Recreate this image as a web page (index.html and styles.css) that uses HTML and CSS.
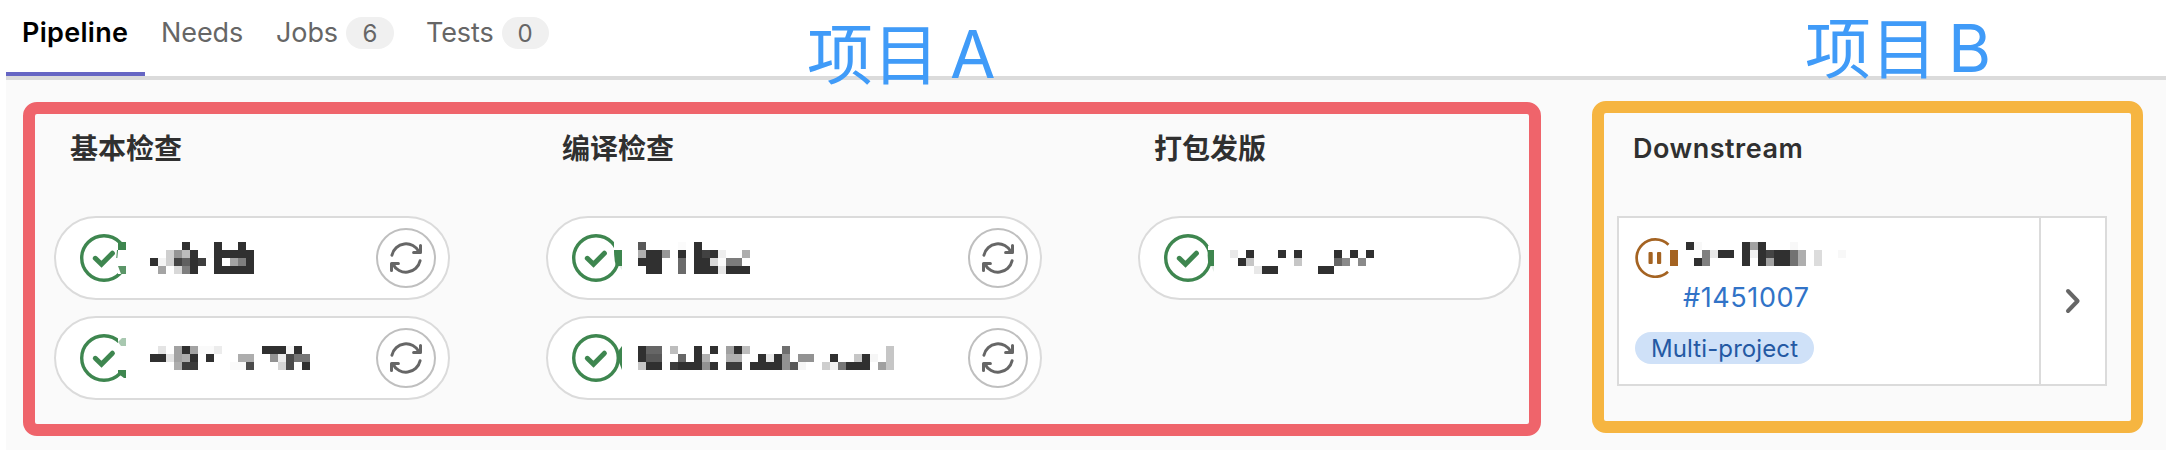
FILE: index.html
```html
<!DOCTYPE html>
<html lang="zh-CN">
<head>
<meta charset="utf-8">
<title>Pipeline</title>
<link rel="stylesheet" href="styles.css">
</head>
<body>
<svg class="defs" aria-hidden="true">
  <symbol id="ok" viewBox="0 0 48 48">
    <circle cx="24" cy="24" r="22.3" fill="none" stroke="#3e864f" stroke-width="3.4"/>
    <path d="M15.3 24.3l6.2 6L32.4 19.2" fill="none" stroke="#3e864f" stroke-width="5" stroke-linejoin="miter" stroke-linecap="round"/>
  </symbol>
  <symbol id="retry" viewBox="0 0 32 32">
    <g id="half" fill="none" stroke="#666" stroke-width="3" stroke-linecap="round" stroke-linejoin="round">
      <path d="M1.9 13.2A14.5 14.5 0 0 1 29 9.8"/>
      <path d="M30.5 3.6V10.6H23.6"/>
    </g>
    <use href="#half" transform="rotate(180 16 16)"/>
  </symbol>
</svg>

<nav class="tabs">
  <a class="tab tab-active"><span class="t-pipeline">Pipeline</span></a>
  <a class="tab tab-needs">Needs</a>
  <a class="tab tab-jobs">Jobs<span class="count">6</span></a>
  <a class="tab tab-tests">Tests<span class="count count-zero">0</span></a>
</nav>

<main class="graph">
  <section class="frame frame-a">
    <div class="stage stage-1">
      <h2 class="title">基本检查</h2>
      <div class="job">
        <svg class="status" viewBox="0 0 56 48"><use href="#ok" width="48" height="48"/>
          <path fill="#fff" d="M38 8h16v32H38z"/><path fill="#3e864f" d="M38 8h8v8h-8zM37 16h1l-.7 8h-1z"/><path fill="#5b9668" d="M38 32h8v8h-5z"/></svg>
        <svg class="mosaic" width="104" height="32" viewBox="0 0 13 4">
          <path fill="#303030" d="M4 0h1v1h-1zM8 0h1v4h-1zM11 0h1v2h-1zM5 1h1v3h-1zM9 1h4v1h-4zM0 2h1v1h-1zM12 2h1v2h-1zM9 3h3v1h-3z"/>
          <path fill="#cfcfcf" d="M2 1h1v2h-1z"/><path fill="#959595" d="M3 1h1v1h-1z"/><path fill="#bcbcbc" d="M4 1h1v1h-1z"/><path fill="#fcfcfc" d="M7 1h1v1h-1z"/>
          <path fill="#f4f4f4" d="M1 2h1v1h-1z"/><path fill="#444" d="M3 2h1v1h-1z"/><path fill="#606060" d="M4 2h1v1h-1z"/><path fill="#3e3e3e" d="M6 2h1v1h-1z"/>
          <path fill="#a4a4a4" d="M10 2h1v1h-1zM1 3h1v1h-1z"/><path fill="#7e7e7e" d="M11 2h1v1h-1zM4 3h1v1h-1z"/><path fill="#d8d8d8" d="M3 3h1v1h-1z"/>
        </svg>
        <button class="retry"><svg width="32" height="32"><use href="#retry"/></svg></button>
      </div>
      <div class="job">
        <svg class="status" viewBox="0 0 56 48"><use href="#ok" width="48" height="48"/>
          <path fill="#fff" d="M38 4h16v36H38z"/><path fill="#a8c8b0" d="M38 8l4-4h4v8h-5z"/><path fill="#3e864f" d="M38 36h8v8h-2l-4-3-2 1z"/></svg>
        <svg class="mosaic" width="160" height="24" viewBox="0 0 20 3">
          <path fill="#303030" d="M4 0h1v1h-1zM14 0h3v1h-3zM18 0h1v1h-1zM0 1h2v1h-2zM5 1h1v1h-1zM7 1h1v1h-1zM19 2h1v1h-1z"/>
          <path fill="#e4e4e4" d="M1 0h1v1h-1zM2 1h1v1h-1z"/><path fill="#a2a2a2" d="M3 0h1v2h-1zM5 0h1v1h-1z"/><path fill="#fafafa" d="M6 0h2v1h-2zM10 2h2v1h-2z"/>
          <path fill="#ececec" d="M8 0h1v1h-1zM16 1h1v1h-1z"/><path fill="#f6f6f6" d="M17 0h1v1h-1z"/><path fill="#adadad" d="M4 1h1v1h-1zM11 1h2v1h-2zM3 2h1v1h-1z"/>
          <path fill="#939393" d="M15 1h1v1h-1z"/><path fill="#4b4b4b" d="M17 1h1v2h-1zM12 2h1v1h-1z"/><path fill="#757575" d="M18 1h2v1h-2z"/><path fill="#3c3c3c" d="M4 2h2v1h-2z"/><path fill="#d6d6d6" d="M16 2h1v1h-1z"/>
        </svg>
        <button class="retry"><svg width="32" height="32"><use href="#retry"/></svg></button>
      </div>
    </div>

    <div class="stage stage-2">
      <h2 class="title">编译检查</h2>
      <div class="job">
        <svg class="status" viewBox="0 0 56 48"><use href="#ok" width="48" height="48"/>
          <path fill="#fff" d="M42 8h8v24h-2l-3-4-3-5z"/><path fill="#3e864f" d="M42 16h8v16h-6q-2-6-2-16z"/><path fill="#e3eee5" d="M47 32h3v4z"/></svg>
        <svg class="mosaic" width="112" height="32" viewBox="0 0 14 4">
          <path fill="#303030" d="M7 0h1v4h-1zM1 1h2v3h-2zM5 1h1v1h-1zM9 1h1v1h-1zM0 2h1v1h-1zM8 2h1v2h-1zM9 3h1v1h-1zM11 3h3v1h-3z"/>
          <path fill="#585858" d="M0 0h1v1h-1z"/><path fill="#fbfbfb" d="M5 0h1v1h-1zM10 2h1v1h-1z"/><path fill="#aeaeae" d="M0 1h1v1h-1zM13 1h1v1h-1z"/><path fill="#979797" d="M3 1h1v1h-1z"/>
          <path fill="#424242" d="M8 1h1v1h-1z"/><path fill="#eee" d="M10 1h1v1h-1z"/><path fill="#6a6a6a" d="M5 2h1v2h-1z"/><path fill="#d8d8d8" d="M9 2h1v1h-1z"/><path fill="#7c7c7c" d="M11 2h2v1h-2z"/><path fill="#e6e6e6" d="M10 3h1v1h-1z"/>
        </svg>
        <button class="retry"><svg width="32" height="32"><use href="#retry"/></svg></button>
      </div>
      <div class="job">
        <svg class="status" viewBox="0 0 56 48"><use href="#ok" width="48" height="48"/><path fill="#3e864f" d="M50 12v24l-3-8V16z"/></svg>
        <svg class="mosaic" width="256" height="24" viewBox="0 0 32 3">
          <path fill="#303030" d="M0 0h1v2h-1zM7 0h1v3h-1zM9 0h1v1h-1zM12 0h1v1h-1zM15 1h1v2h-1zM17 1h1v2h-1zM24 1h1v1h-1zM28 1h1v2h-1zM1 2h2v1h-2zM5 2h2v1h-2zM9 2h1v1h-1zM14 2h1v1h-1zM16 2h1v1h-1zM26 2h2v1h-2z"/>
          <path fill="#666" d="M1 0h2v1h-2zM5 1h1v1h-1z"/><path fill="#bdbdbd" d="M4 0h1v1h-1zM13 0h1v1h-1z"/><path fill="#a0a0a0" d="M11 0h1v1h-1zM30 2h1v1h-1z"/><path fill="#6f6f6f" d="M18 0h1v1h-1z"/>
          <path fill="#c6c6c6" d="M31 0h1v3h-1zM27 1h1v1h-1zM0 2h1v1h-1z"/><path fill="#585858" d="M1 1h2v1h-2zM19 2h1v1h-1z"/><path fill="#b0b0b0" d="M8 1h1v1h-1zM11 1h2v1h-2z"/><path fill="#e8e8e8" d="M16 1h1v1h-1z"/>
          <path fill="#929292" d="M18 1h1v2h-1zM20 1h2v1h-2zM8 2h1v1h-1z"/><path fill="#f6f6f6" d="M29 1h1v1h-1zM20 2h1v1h-1z"/><path fill="#3c3c3c" d="M4 2h1v1h-1zM11 2h2v1h-2z"/><path fill="#cecece" d="M23 2h1v1h-1z"/><path fill="#f2f2f2" d="M24 2h1v1h-1z"/><path fill="#777" d="M25 2h1v1h-1z"/>
        </svg>
        <button class="retry"><svg width="32" height="32"><use href="#retry"/></svg></button>
      </div>
    </div>

    <div class="stage stage-3">
      <h2 class="title">打包发版</h2>
      <div class="job">
        <svg class="status" viewBox="0 0 56 48"><use href="#ok" width="48" height="48"/>
          <path fill="#fff" d="M44 12h6v20h-3l-3-8z"/><path fill="#3e864f" d="M44 16h6v16h-5q-2-8-1-16z"/><path fill="#e3eee5" d="M47 32h3v6z"/></svg>
        <svg class="mosaic" width="144" height="24" viewBox="0 0 18 3">
          <path fill="#303030" d="M2 0h1v1h-1zM6 0h1v1h-1zM8 0h1v1h-1zM13 0h1v1h-1zM15 0h1v1h-1zM17 0h1v1h-1zM1 1h1v1h-1zM4 2h2v1h-2zM11 2h2v1h-2z"/>
          <path fill="#e8e8e8" d="M0 0h1v1h-1zM3 2h1v1h-1z"/><path fill="#c6c6c6" d="M2 1h1v1h-1zM8 1h1v1h-1z"/><path fill="#666" d="M13 1h1v1h-1z"/><path fill="#8a8a8a" d="M14 1h1v1h-1zM16 1h1v1h-1z"/>
        </svg>
      </div>
    </div>
  </section>

  <section class="frame frame-b">
    <h2 class="title title-down"><span class="t-down">Downstream</span></h2>
    <div class="card">
      <div class="card-main">
        <div class="card-head">
          <svg width="44" height="40" viewBox="0 0 44 40">
            <path d="M33.5 6.8A18.7 18.7 0 1 0 33 33.8" fill="none" stroke="#a46322" stroke-width="2.7"/>
            <path fill="#a46322" d="M35 12h8v16h-8z"/>
            <rect x="13.5" y="14" width="4.2" height="12" rx="1" fill="#a46322"/><rect x="22" y="14" width="4.2" height="12" rx="1" fill="#a46322"/>
          </svg>
          <svg class="mosaic" width="160" height="24" viewBox="0 0 20 3">
            <path fill="#303030" d="M0 0h1v1h-1zM7 0h1v3h-1zM9 0h1v3h-1zM4 1h2v1h-2zM11 1h2v2h-2zM1 2h1v1h-1z"/>
            <path fill="#f8f8f8" d="M1 0h1v1h-1zM13 0h1v1h-1zM19 1h1v1h-1z"/><path fill="#a2a2a2" d="M8 0h1v1h-1zM10 2h1v1h-1z"/><path fill="#808080" d="M2 1h1v2h-1z"/><path fill="#e8e8e8" d="M3 1h1v1h-1z"/>
            <path fill="#f0f0f0" d="M8 1h1v1h-1z"/><path fill="#444" d="M10 1h1v1h-1z"/><path fill="#727272" d="M13 1h1v2h-1z"/><path fill="#aeaeae" d="M14 1h1v2h-1z"/><path fill="#dcdcdc" d="M16 1h1v2h-1z"/>
          </svg>
        </div>
        <a class="number"><span class="t-num">#1451007</span></a>
        <span class="badge"><span class="t-multi">Multi-project</span></span>
      </div>
      <div class="expand">
        <svg width="16" height="26" viewBox="0 0 16 26"><path d="M3 3l9.6 10L3 23" fill="none" stroke="#666" stroke-width="4" stroke-linecap="round" stroke-linejoin="round"/></svg>
      </div>
    </div>
  </section>
</main>

<div class="note note-a">项目<span class="letter">A</span></div>
<div class="note note-b">项目<span class="letter">B</span></div>
</body>
</html>
```

FILE: styles.css
```css
* { box-sizing: border-box; }
body {
  margin: 0;
  width: 2166px;
  height: 450px;
  overflow: hidden;
  background: #fff;
  position: relative;
  font-family: Inter, "Noto Sans CJK SC", sans-serif;
  font-size: 27px;
  color: #303030;
}
svg { display: block; flex: none; }
.defs { position: absolute; width: 0; height: 0; }
.mosaic { shape-rendering: crispEdges; }

.tabs {
  display: flex;
  height: 80px;
  margin-left: 6px;
  border-bottom: 4px solid #dbdbdb;
  color: #666;
  line-height: 65px;
  white-space: nowrap;
}
.tab { display: flex; height: 76px; letter-spacing: -0.1px; }
.tab-active {
  width: 139px;
  padding-left: 16px;
  border-bottom: 4px solid #6666c4;
  color: #000;
  font-weight: 600;
}
.t-pipeline { letter-spacing: 0.3px; }
.tab-needs { width: 131px; padding-left: 16px; }
.tab-jobs { width: 150px; }
.count {
  width: 48px;
  height: 32px;
  margin: 17px 0 0 8px;
  border-radius: 16px;
  background: #f0f0f0;
  font-size: 24px;
  line-height: 33px;
  text-align: center;
}
.count-zero { width: 47px; }

.graph {
  display: flex;
  align-items: flex-start;
  height: 370px;
  margin-left: 6px;
  padding: 21px 0 0 17px;
  background: #fafafa;
}
.frame { border: 12px solid #ef646b; border-radius: 14px; }
.frame-a {
  display: flex;
  width: 1518px;
  height: 334px;
  margin-top: 1px;
  padding-left: 19px;
}
.frame-b {
  width: 551px;
  height: 332px;
  margin-left: 51px;
  padding-left: 13px;
  border-color: #f6b541;
}
.stage-1 { width: 396px; margin-right: 96px; }
.stage-2 { width: 496px; margin-right: 96px; }
.stage-3 { width: 383px; }
.title {
  height: 102px;
  margin: 0;
  padding: 15px 0 0 16px;
  font-size: 28px;
  line-height: 40px;
  font-weight: 700;
}
.title-down { height: 103px; padding-top: 16px; font-size: 27px; font-weight: 600; }
.t-down { letter-spacing: 0.5px; }
.job {
  display: flex;
  align-items: center;
  height: 84px;
  margin-bottom: 16px;
  padding: 0 12px 0 24px;
  border: 2px solid #dbdbdb;
  border-radius: 42px;
  background: #fff;
}
.status { width: 56px; height: 48px; margin-right: 14px; }
.stage-2 .status { margin-right: 10px; }
.stage-3 .status { margin-right: 10px; }
.stage-3 .mosaic { margin-top: 8px; }
.retry {
  display: flex;
  align-items: center;
  justify-content: center;
  width: 60px;
  height: 60px;
  margin-left: auto;
  padding: 0;
  border: 2px solid #bfbfbf;
  border-radius: 50%;
  background: #fff;
}

.card {
  display: flex;
  width: 490px;
  height: 170px;
  border: 2px solid #dbdbdb;
  background: #fff;
}
.card-main {
  display: flex;
  flex-direction: column;
  align-items: flex-start;
  width: 420px;
  padding: 20px 0 0 16px;
}
.card-head { display: flex; align-items: flex-start; gap: 7px; }
.card-head .mosaic { margin-top: 4px; }
.number { margin-left: 48px; color: #3173c7; line-height: 39px; }
.t-num { letter-spacing: 0.6px; }
.badge {
  width: 179px;
  height: 32px;
  margin-top: 15px;
  padding-left: 16px;
  border-radius: 16px;
  background: #cfe1f8;
  color: #2459a3;
  font-size: 24px;
  line-height: 33px;
  white-space: nowrap;
}
.t-multi { letter-spacing: 0.1px; }
.expand {
  display: flex;
  flex: 1;
  align-items: center;
  justify-content: center;
  border-left: 2px solid #dbdbdb;
}

.note {
  position: absolute;
  display: flex;
  color: #409bf8;
  font-family: "Noto Sans CJK SC", sans-serif;
  font-size: 66px;
  line-height: 80px;
  white-space: nowrap;
}
.note-a { left: 807px; top: 10px; }
.note-b { left: 1805px; top: 4px; }
.letter { margin: 4px 0 0 11px; font-family: Inter, sans-serif; }
```
